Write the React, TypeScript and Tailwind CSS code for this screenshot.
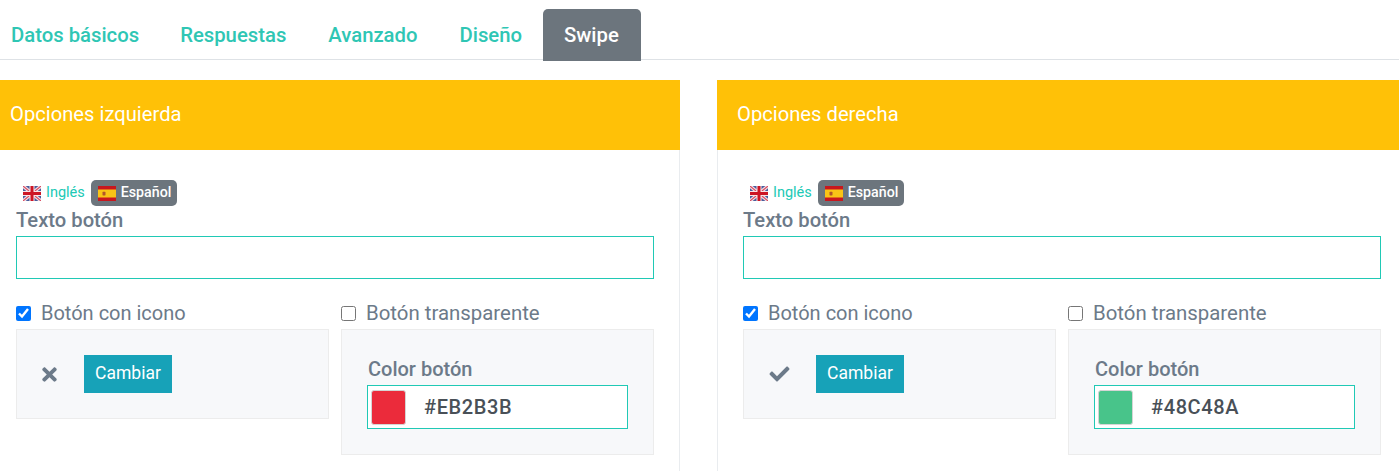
import React from "react";
import { FaTimes, FaCheck } from "react-icons/fa";

const font = { fontFamily: '"Roboto", "Liberation Sans", sans-serif' };

function UkFlag() {
  return (
    <svg width="18" height="15" viewBox="0 0 18 15" className="shrink-0">
      <rect width="18" height="15" fill="#4a5c9c" />
      <path d="M0 0L18 15M18 0L0 15" stroke="#f3dfe4" strokeWidth="3.4" />
      <path d="M0 0L18 15M18 0L0 15" stroke="#d8495f" strokeWidth="1.1" />
      <path d="M9 0V15M0 7.5H18" stroke="#f8e4e6" strokeWidth="5" />
      <path d="M9 0V15M0 7.5H18" stroke="#cc1424" strokeWidth="3" />
    </svg>
  );
}

function EsFlag() {
  return (
    <svg width="18" height="15" viewBox="0 0 18 15" className="shrink-0">
      <rect width="18" height="15" fill="#c8171e" />
      <rect y="3.5" width="18" height="8" fill="#f9c416" />
      <rect x="4.5" y="5.8" width="3" height="3.6" rx="0.6" fill="#b2562a" />
    </svg>
  );
}

function Panel({
  title,
  icon,
  color,
  hex,
  className,
  bodyClass,
}: {
  title: string;
  icon: React.ReactNode;
  color: string;
  hex: string;
  className: string;
  bodyClass: string;
}) {
  return (
    <section className={className}>
      <div className="h-[70px] bg-[#ffc107] flex items-center px-[10px] pb-[1px] text-[20.2px] text-white">
        <span className={bodyClass === "right" ? "pl-[10px]" : ""}>{title}</span>
      </div>
      <div className={bodyClass === "right" ? "border-l border-[#e9ecef] h-[321px] pl-[25px] pr-[18px] pt-[30px]" : "border-r border-[#e9ecef] h-[321px] pl-[16px] pr-[25px] pt-[30px]"}>
        <div className="flex items-center h-[26px] text-[14.5px] pl-[7px]">
          <span className="flex items-center gap-[5px] text-[#20c9b5]">
            <UkFlag />
            Inglés
          </span>
          <span className="flex items-center gap-[5px] ml-[6px] h-[26px] w-[86px] pl-[7px] rounded-[5px] bg-[#6c757d] text-white text-[14.2px] font-medium">
            <EsFlag />
            Español
          </span>
        </div>
        <label className="block mt-[3px] h-[27px] leading-[22px] text-[20.2px] font-medium text-[#6c7a89]">Texto botón</label>
        <input className="block w-[638px] h-[43px] border border-[#20c9b5] bg-white outline-none" />
        <div className="grid grid-cols-[313px_313px] gap-x-[12px] mt-[26px]">
          <div>
            <label className="flex items-center h-[24px] pb-[8px] text-[20px] text-[#6c7a89]">
              <input type="checkbox" defaultChecked className="w-[15px] h-[15px] m-0 mr-[10px] accent-[#0075ff]" />
              Botón con icono
            </label>
            <div className="h-[90px] bg-[#f7f8fa] border border-[#ececec] flex items-center pl-[25px]">
              <div className={bodyClass === "right" ? "mr-[26px] text-[#6c7a89]" : "mr-[27px] text-[#6c7a89]"}>{icon}</div>
              <button className="w-[88px] h-[38px] pb-[1px] bg-[#17a2b8] text-white text-[17.5px] flex items-center justify-center">Cambiar</button>
            </div>
          </div>
          <div>
            <label className="flex items-center h-[24px] pb-[8px] text-[20.4px] text-[#6c7a89]">
              <input type="checkbox" className="w-[15px] h-[15px] m-0 mr-[10px]" />
              Botón transparente
            </label>
            <div className="h-[126px] bg-[#f7f8fa] border border-[#ececec] pl-[25px] pt-[26px]">
              <div className="h-[29px] pl-[1px] leading-[26px] text-[20px] font-medium text-[#6c7a89]">Color botón</div>
              <div className="w-[261px] h-[44px] border border-[#20c9b5] bg-white flex items-center pl-[3px]">
                <span className={"w-[35px] h-[35px] rounded-[3px] border border-[#d5d5d5] " + color} />
                <span className="ml-[18px] text-[20px] font-medium tracking-[0.6px] text-[#495057]">{hex}</span>
              </div>
            </div>
          </div>
        </div>
      </div>
    </section>
  );
}

export default function App() {
  return (
    <div style={font} className="w-[1399px] h-[471px] overflow-hidden bg-white">
      <nav className="h-[60px] border-b border-[#dee2e6] flex items-start pt-[9px] text-[20.3px] font-medium">
        <a className="h-[52px] flex items-center pl-[11px] pr-[20px] text-[#2fc6b4]">Datos básicos</a>
        <a className="h-[52px] flex items-center px-[21px] text-[#2fc6b4]">Respuestas</a>
        <a className="h-[52px] flex items-center px-[21px] text-[#2fc6b4]">Avanzado</a>
        <a className="h-[52px] flex items-center px-[21px] text-[#2fc6b4]">Diseño</a>
        <a className="h-[52px] flex items-center pl-[21px] pr-[22px] rounded-t-[5px] bg-[#6c757d] text-white">Swipe</a>
      </nav>
      <main className="flex gap-[37px] pt-[20px]">
        <Panel className="w-[680px]" bodyClass="left" title="Opciones izquierda" icon={<FaTimes className="w-[15px] h-[21px]" />} color="bg-[#eb2b3b]" hex="#EB2B3B" />
        <Panel className="w-[682px]" bodyClass="right" title="Opciones derecha" icon={<FaCheck className="w-[21px] h-[20px]" />} color="bg-[#48c48a]" hex="#48C48A" />
      </main>
    </div>
  );
}
